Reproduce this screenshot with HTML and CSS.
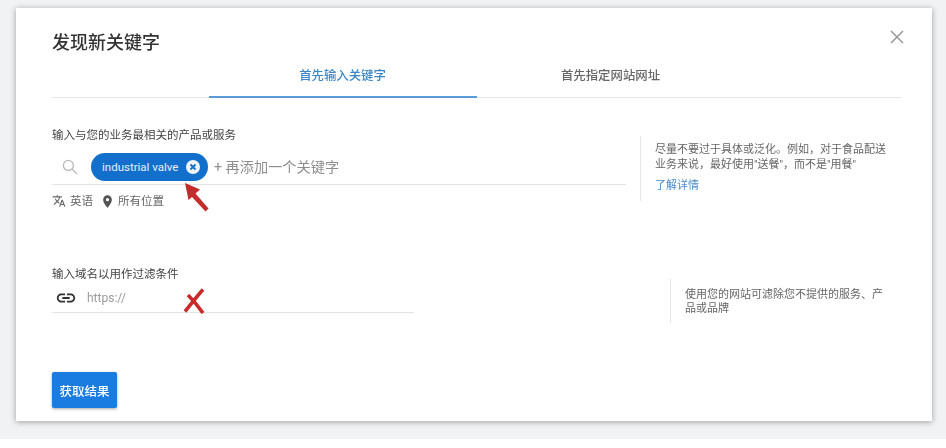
FILE: index.html
```html
<!DOCTYPE html>
<html lang="zh-CN">
<head>
<meta charset="utf-8">
<title>发现新关键字</title>
<link rel="stylesheet" href="styles.css">
</head>
<body>
<div class="stage">
  <main class="dialog">
    <h1 class="title">发现新关键字</h1>
    <svg class="close" viewBox="0 0 14 14" width="14" height="14"><path d="M1 1 13 13M13 1 1 13"/></svg>
    <nav class="tabs">
      <div class="tab tab-active">首先输入关键字</div>
      <div class="tab">首先指定网站网址</div>
    </nav>

    <section class="row row-keyword">
      <div class="col-keyword">
        <div class="label">输入与您的业务最相关的产品或服务</div>
        <div class="field field-keyword">
          <svg class="search" viewBox="0 0 16 16" width="16" height="16"><circle cx="6.4" cy="6.4" r="5"/><path d="M10 10l5 5"/></svg>
          <div class="chip">
            <span class="chip-text">industrial valve</span>
            <svg class="chip-x" viewBox="0 0 14 14" width="14" height="14"><circle cx="7" cy="7" r="7"/><path d="M4.5 4.5l5 5M9.5 4.5l-5 5"/></svg>
          </div>
          <span class="placeholder">+ 再添加一个关键字</span>
        </div>
        <div class="meta">
          <svg class="meta-icon" viewBox="0 0 24 24" width="14" height="14"><path d="M12.87 15.07l-2.54-2.51.03-.03A17.52 17.52 0 0 0 14.07 6H17V4h-7V2H8v2H1v2h11.17C11.5 7.92 10.44 9.75 9 11.35 8.07 10.32 7.3 9.19 6.69 8h-2c.73 1.63 1.73 3.17 2.98 4.56l-5.09 5.02L4 19l5-5 3.11 3.11.76-2.04zM18.5 10h-2L12 22h2l1.12-3h4.75L21 22h2l-4.5-12zm-2.62 7l1.62-4.33L19.12 17h-3.24z"/></svg>
          <span>英语</span>
          <svg class="meta-icon pin" viewBox="0 0 24 24" width="15" height="15"><path d="M12 2C8.13 2 5 5.13 5 9c0 5.25 7 13 7 13s7-7.75 7-13c0-3.87-3.13-7-7-7zm0 9.5a2.5 2.5 0 0 1 0-5 2.5 2.5 0 0 1 0 5z"/></svg>
          <span>所有位置</span>
        </div>
      </div>
      <aside class="side side-keyword">
        <p class="side-text">尽量不要过于具体或泛化。例如&#xFF0C;对于食品配送业务来说&#xFF0C;最好使用"送餐"&#xFF0C;而不是"用餐"</p>
        <a class="side-link">了解详情</a>
      </aside>
    </section>

    <section class="row row-domain">
      <div class="col-domain">
        <div class="label">输入域名以用作过滤条件</div>
        <div class="field field-domain">
          <svg class="link-icon" viewBox="0 0 24 24" width="22" height="22"><path d="M3.9 12c0-1.71 1.39-3.1 3.1-3.1h4V7H7c-2.76 0-5 2.24-5 5s2.24 5 5 5h4v-1.9H7c-1.71 0-3.1-1.39-3.1-3.1zM8 13h8v-2H8v2zm9-6h-4v1.9h4c1.71 0 3.1 1.39 3.1 3.1s-1.39 3.1-3.1 3.1h-4V17h4c2.76 0 5-2.24 5-5s-2.24-5-5-5z"/></svg>
          <span class="https">https://</span>
        </div>
      </div>
      <aside class="side side-domain">
        <p class="side-text">使用您的网站可滤除您不提供的服务、产品或品牌</p>
      </aside>
    </section>

    <button class="submit" type="button">获取结果</button>

    <svg class="mark mark-arrow" viewBox="0 0 28 32" width="28" height="32"><path d="M0 1l15 6.500-4.500 4L23.500 26.500 20.500 29.500 7 15l-3.500 3z"/></svg>
    <svg class="mark mark-x" viewBox="0 0 24 26" width="24" height="26"><path d="M20 1.500C15 7 9 15 2 23.500M5 7c5 5 10 11 15 18"/></svg>
  </main>
</div>
</body>
</html>
```

FILE: styles.css
```css
* {
  box-sizing: border-box;
}

html,
body {
  margin: 0;
  background: #fff;
}

body {
  font-family: Roboto, "Noto Sans CJK SC", sans-serif;
  color: #444;
  overflow: hidden;
}

.stage {
  height: 439px;
  padding: 8px 14px 0 16px;
  background: #f0f2f3;
}

.dialog {
  position: relative;
  display: flex;
  flex-direction: column;
  align-items: flex-start;
  height: 413px;
  padding: 0 31px 0 36px;
  background: #fff;
  box-shadow: 0 1px 6px rgba(0, 0, 0, 0.35);
  filter: blur(0.35px);
}

.title {
  margin: 23px 0 0;
  font-size: 18px;
  line-height: 24px;
  font-weight: 500;
  color: #333;
}

.close {
  position: absolute;
  top: 22px;
  right: 28px;
  fill: none;
  stroke: #9a9a9a;
  stroke-width: 1.6;
}

.tabs {
  display: flex;
  justify-content: center;
  width: 100%;
  height: 43px;
  border-bottom: 1px solid #e6e7e8;
}

.tab {
  width: 268px;
  height: 43px;
  padding-top: 13px;
  font-size: 12.4px;
  line-height: 16px;
  font-weight: 500;
  text-align: center;
  color: #666;
}

.tab-active {
  color: #3b86c8;
  border-bottom: 2px solid #5a9bd8;
}

.row {
  display: flex;
  justify-content: space-between;
  align-items: flex-start;
  width: 100%;
}

.row-keyword {
  margin-top: 29px;
  height: 84px;
}

.col-keyword {
  width: 574px;
}

.col-domain {
  width: 362px;
}

.label {
  font-size: 11.5px;
  line-height: 16px;
  color: #444;
}

.field {
  display: flex;
  align-items: center;
  border-bottom: 1px solid #e4e5e6;
}

.field-keyword {
  height: 33px;
  margin-top: 9px;
  padding-bottom: 3px;
}

.search {
  margin: 0 13px 0 10px;
  fill: none;
  stroke: #b9b9b9;
  stroke-width: 1.3;
}

.chip {
  display: flex;
  align-items: center;
  width: 117px;
  height: 28px;
  padding: 0 8px 0 11px;
  border-radius: 14px;
  background: #1270cc;
  color: #e4effa;
}

.chip-text {
  flex: 1;
  font-size: 11.5px;
  line-height: 16px;
  white-space: nowrap;
}

.chip-x circle {
  fill: #eef5fc;
}

.chip-x path {
  fill: none;
  stroke: #1270cc;
  stroke-width: 1.8;
}

.placeholder {
  margin-left: 6px;
  font-size: 14.2px;
  line-height: 20px;
  color: #8e8e8e;
}

.meta {
  display: flex;
  align-items: center;
  height: 16px;
  margin-top: 8px;
  font-size: 11.5px;
  line-height: 16px;
  color: #666;
}

.meta-icon {
  margin-right: 4px;
  fill: #666;
}

.pin {
  margin-left: 7px;
  margin-right: 3px;
  fill: #555;
}

.side {
  border-left: 1px solid #e4e5e6;
}

.side-keyword {
  width: 261px;
  height: 65px;
  margin-top: 9px;
  padding: 7px 0 0 14px;
}

.side-domain {
  width: 231px;
  height: 44px;
  margin-top: 13px;
  padding: 9px 0 0 14px;
}

.side-text {
  width: 232px;
  margin: 0;
  font-size: 11px;
  line-height: 14.5px;
  color: #666;
}

.side-domain .side-text {
  width: 206px;
  line-height: 14px;
}

.side-link {
  display: block;
  margin-top: 7px;
  font-size: 11px;
  line-height: 14px;
  color: #4a8cc9;
}

.row-domain {
  margin-top: 55px;
}

.field-domain {
  height: 31px;
  padding: 1px 0 0;
}

.link-icon {
  margin: 0 10px 0 3px;
  fill: #333;
}

.https {
  font-size: 12px;
  line-height: 16px;
  color: #9a9a9a;
}

.submit {
  width: 65px;
  height: 36px;
  margin-top: 49px;
  padding: 0;
  border: 0;
  border-radius: 2px;
  background: #1a7be0;
  box-shadow: 0 1px 3px rgba(0, 0, 0, 0.35);
  font-family: inherit;
  font-size: 12.5px;
  font-weight: 500;
  color: #fff;
}

.mark {
  position: absolute;
}

.mark-arrow {
  left: 169px;
  top: 174px;
  fill: #c42b2b;
}

.mark-x {
  left: 167px;
  top: 280px;
  fill: none;
  stroke: #c92a2a;
  stroke-width: 3.6;
}
```
